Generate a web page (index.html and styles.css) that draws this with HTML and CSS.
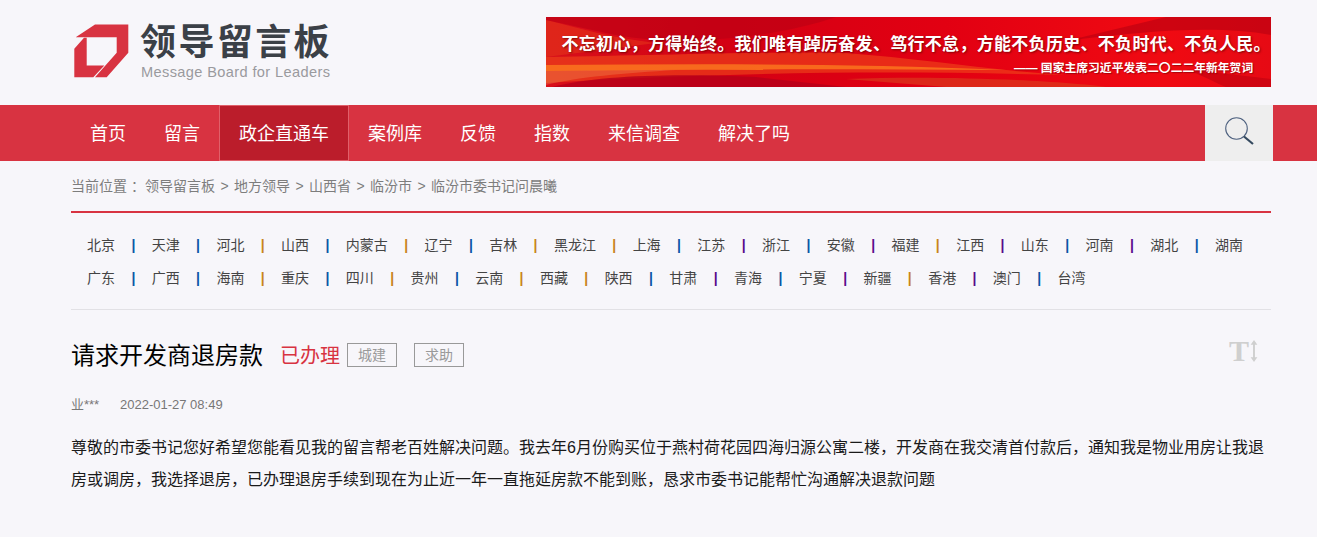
FILE: index.html
```html
<!DOCTYPE html>
<html lang="zh-CN">
<head>
<meta charset="utf-8">
<title>请求开发商退房款</title>
<link rel="stylesheet" href="styles.css">
</head>
<body>
<header class="header">
  <a class="logo" href="#">
    <svg class="logo-mark" width="56" height="54" viewBox="73 24.5 56 54" aria-hidden="true">
      <polygon fill="#d83341" points="75.7,37.7 95,25 128.3,25 128.3,53.3 106.7,77.7 95,77.7 116.7,53.3 116.7,37.7"/>
      <polygon fill="#d83341" points="74.3,49.3 84,38.3 86.7,38.3 86.7,66 104.3,66 93.3,77.7 74.3,77.7"/>
    </svg>
    <span class="logo-text">
      <span class="logo-cn">领导留言板</span>
      <span class="logo-en">Message Board for Leaders</span>
    </span>
  </a>
  <div class="banner">
    <svg class="banner-art" width="725" height="70" viewBox="0 0 725 70" preserveAspectRatio="none" aria-hidden="true">
      <path fill="#e8401a" fill-opacity=".45" d="M0 3 C30 10 60 20 110 26 L0 40Z"/>
      <path fill="#bd0014" fill-opacity=".65" d="M0 3 L0 0 L290 0 C220 24 120 30 60 16Z"/>
      <path fill="#f0481a" fill-opacity=".6" d="M0 40 C120 38 240 34 300 36 C380 42 450 54 520 58 C360 54 200 54 0 66Z"/>
      <path fill="#ff8420" fill-opacity=".7" d="M0 48 C150 47 300 46 460 53 C300 52 150 52 0 54Z"/>
      <path fill="#f2a060" fill-opacity=".3" d="M0 54 C40 53 90 53 130 53 C80 56 30 60 0 68Z"/>
      <path fill="#b5001a" fill-opacity=".8" d="M6 70 C50 58 130 56 210 60 L300 70Z"/>
      <path fill="#d8421e" fill-opacity=".6" d="M300 62 C400 58 520 64 560 70 L400 70Z"/>
      <path fill="#b80010" fill-opacity=".6" d="M520 24 C600 14 670 8 725 18 L725 0 L620 0Z"/>
      <path fill="#b80010" fill-opacity=".5" d="M725 70 L725 62 L640 52 C660 60 670 66 680 70Z"/>
    </svg>
    <p class="banner-main">不忘初心，方得始终。我们唯有踔厉奋发、笃行不怠，方能不负历史、不负时代、不负人民。</p>
    <p class="banner-sub">—— 国家主席习近平发表二〇二二年新年贺词</p>
  </div>
</header>

<nav class="nav">
  <ul class="nav-list">
    <li><a href="#">首页</a></li>
    <li><a href="#">留言</a></li>
    <li class="active"><a href="#">政企直通车</a></li>
    <li><a href="#">案例库</a></li>
    <li><a href="#">反馈</a></li>
    <li><a href="#">指数</a></li>
    <li><a href="#">来信调查</a></li>
    <li><a href="#">解决了吗</a></li>
  </ul>
  <a class="search" href="#" aria-label="搜索">
    <svg width="34" height="32" viewBox="0 0 34 32" aria-hidden="true">
      <circle cx="12.5" cy="11.5" r="10.8" fill="none" stroke="#4f6280" stroke-width="1.1"/>
      <line x1="20" y1="19.5" x2="29" y2="27" stroke="#34495f" stroke-width="2.2"/>
    </svg>
  </a>
</nav>

<main class="main">
  <div class="crumbs">
    <span class="crumb-label">当前位置 ：</span><a href="#">领导留言板</a><span class="gt">&gt;</span><a href="#">地方领导</a><span class="gt">&gt;</span><a href="#">山西省</a><span class="gt">&gt;</span><a href="#">临汾市</a><span class="gt">&gt;</span><a href="#">临汾市委书记问晨曦</a>
  </div>

  <ul class="regions">
    <li class="s-b"><a href="#">北京</a></li><li class="s-b"><a href="#">天津</a></li><li class="s-o"><a href="#">河北</a></li><li class="s-b"><a href="#">山西</a></li><li class="s-o"><a href="#">内蒙古</a></li><li class="s-b"><a href="#">辽宁</a></li><li class="s-o"><a href="#">吉林</a></li><li class="s-o"><a href="#">黑龙江</a></li><li class="s-b"><a href="#">上海</a></li><li class="s-p"><a href="#">江苏</a></li><li class="s-b"><a href="#">浙江</a></li><li class="s-p"><a href="#">安徽</a></li><li class="s-o"><a href="#">福建</a></li><li class="s-p"><a href="#">江西</a></li><li class="s-b"><a href="#">山东</a></li><li class="s-p"><a href="#">河南</a></li><li class="s-b"><a href="#">湖北</a></li><li class="end"><a href="#">湖南</a></li>
    <li class="s-b"><a href="#">广东</a></li><li class="s-b"><a href="#">广西</a></li><li class="s-o"><a href="#">海南</a></li><li class="s-b"><a href="#">重庆</a></li><li class="s-o"><a href="#">四川</a></li><li class="s-b"><a href="#">贵州</a></li><li class="s-o"><a href="#">云南</a></li><li class="s-o"><a href="#">西藏</a></li><li class="s-b"><a href="#">陕西</a></li><li class="s-p"><a href="#">甘肃</a></li><li class="s-b"><a href="#">青海</a></li><li class="s-p"><a href="#">宁夏</a></li><li class="s-o"><a href="#">新疆</a></li><li class="s-p"><a href="#">香港</a></li><li class="s-b"><a href="#">澳门</a></li><li class="end"><a href="#">台湾</a></li>
  </ul>

  <article class="post">
    <div class="post-head">
      <h1 class="post-title">请求开发商退房款</h1>
      <span class="post-state">已办理</span>
      <span class="tag">城建</span>
      <span class="tag tag-second">求助</span>
      <button class="font-toggle" type="button"><span class="font-t">T</span>
        <svg width="8" height="22" viewBox="0 0 8 23" aria-hidden="true">
          <path fill="#cfcfcf" d="M4 0 L7.5 5 H5 V18 H7.5 L4 23 L.5 18 H3 V5 H.5Z"/>
        </svg>
      </button>
    </div>
    <div class="post-meta"><span class="author">业***</span><span>2022-01-27 08:49</span></div>
    <p class="post-body">尊敬的市委书记您好希望您能看见我的留言帮老百姓解决问题。我去年6月份购买位于燕村荷花园四海归源公寓二楼，开发商在我交清首付款后，通知我是物业用房让我退房或调房，我选择退房，已办理退房手续到现在为止近一年一直拖延房款不能到账，恳求市委书记能帮忙沟通解决退款问题</p>
  </article>
</main>
</body>
</html>
```

FILE: styles.css
```css
* { box-sizing: border-box; }
html, body { margin: 0; padding: 0; }
body {
  background: #f7f6fa;
  color: #333;
  font-family: "Liberation Sans", "Noto Sans CJK SC", sans-serif;
  overflow: hidden;
}
a { color: inherit; text-decoration: none; }
ul { list-style: none; margin: 0; padding: 0; }
p, h1 { margin: 0; }

.header {
  height: 105px;
  padding: 17px 46px 0 73px;
  display: flex;
  justify-content: space-between;
  align-items: flex-start;
}
.logo { display: flex; gap: 11px; padding-top: 7px; }
.logo-mark { display: block; }
.logo-text { display: flex; flex-direction: column; margin-top: -1px; }
.logo-cn {
  font-size: 36px;
  letter-spacing: 2.4px;
  line-height: 40px;
  font-weight: 700;
  color: #3b4047;
  white-space: nowrap;
}
.logo-en {
  font-size: 14.6px;
  letter-spacing: .37px;
  line-height: 17px;
  margin-top: 1px;
  margin-left: 1px;
  color: #9a9a9e;
  white-space: nowrap;
}

.banner {
  position: relative;
  width: 725px;
  height: 70px;
  overflow: hidden;
  color: #fff;
  font-weight: 700;
  background: linear-gradient(90deg, #d8101a 0%, #d40014 25%, #e20012 55%, #f00a12 85%, #e60a14 100%);
}
.banner-art { position: absolute; left: 0; top: 0; }
.banner-main {
  position: relative;
  padding: 16px 0 0 15.5px;
  font-size: 17px;
  line-height: 24px;
  letter-spacing: .3px;
  white-space: nowrap;
  text-shadow: 1px 1px 2px rgba(90, 0, 0, .7);
}
.banner-sub {
  position: relative;
  margin-top: 3px;
  padding-left: 468px;
  font-size: 11.8px;
  line-height: 16px;
  white-space: nowrap;
  text-shadow: 1px 1px 1px rgba(90, 0, 0, .5);
}

.nav {
  height: 56px;
  background: #d83341;
  padding: 0 44px 0 71px;
  display: flex;
  justify-content: space-between;
}
.nav-list { display: flex; }
.nav-list a {
  display: block;
  height: 56px;
  padding: 0 19px;
  font-size: 18px;
  line-height: 58px;
  color: #fff;
  white-space: nowrap;
}
.nav-list .active a {
  background: #bb1d2b;
  border: 1px solid #e0606a;
  line-height: 56px;
}
.search {
  width: 68px;
  background: #eeeeee;
  display: flex;
  align-items: center;
  justify-content: center;
  padding-left: 3px;
}

.main { width: 1200px; margin-left: 71px; }

.crumbs {
  height: 52px;
  border-bottom: 2px solid #d83341;
  font-size: 14px;
  line-height: 50px;
  color: #7d7d7d;
  white-space: nowrap;
}
.gt {
  display: inline-block;
  width: 8px;
  margin: 0 5.5px;
  text-align: center;
}

.regions {
  display: flex;
  flex-wrap: wrap;
  padding: 16px 0 14px 16px;
  border-bottom: 1px solid #e2e1e5;
  font-size: 14px;
  line-height: 33px;
  color: #444;
}
.regions li { white-space: nowrap; }
.regions li::after { content: "|"; margin: 0 16.4px; font-weight: 700; }
.regions li.s-b::after { color: #0a56a6; }
.regions li.s-o::after { color: #c8841c; }
.regions li.s-p::after { color: #5a0a8c; }
.regions li.end::after { content: none; }

.post-head {
  display: flex;
  align-items: center;
  height: 32px;
  margin-top: 30px;
}
.post-title {
  font-size: 24px;
  line-height: 32px;
  font-weight: 400;
  color: #000;
}
.post-state {
  margin-left: 17px;
  font-size: 20px;
  line-height: 32px;
  color: #d83341;
}
.tag {
  align-self: flex-start;
  margin-top: 3px;
  margin-left: 7px;
  width: 50px;
  height: 24px;
  border: 1px solid #999;
  font-size: 14px;
  line-height: 22px;
  text-align: center;
  color: #999;
}
.tag-second { margin-left: 17px; }
.font-toggle {
  margin-left: auto;
  margin-right: 13px;
  margin-top: -10px;
  padding: 0;
  height: 28px;
  border: 0;
  background: none;
  display: flex;
  align-items: center;
  gap: 1px;
}
.font-t {
  font-family: "Liberation Serif", serif;
  font-size: 30px;
  line-height: 28px;
  font-weight: 700;
  color: #cfcfcf;
}

.post-meta {
  margin-top: 23px;
  height: 20px;
  display: flex;
  gap: 20px;
  font-size: 13px;
  line-height: 20px;
  color: #777;
}
.author { width: 29px; }
.post-body {
  margin-top: 17px;
  font-size: 16px;
  line-height: 32px;
  color: #1a1a1a;
}
```
